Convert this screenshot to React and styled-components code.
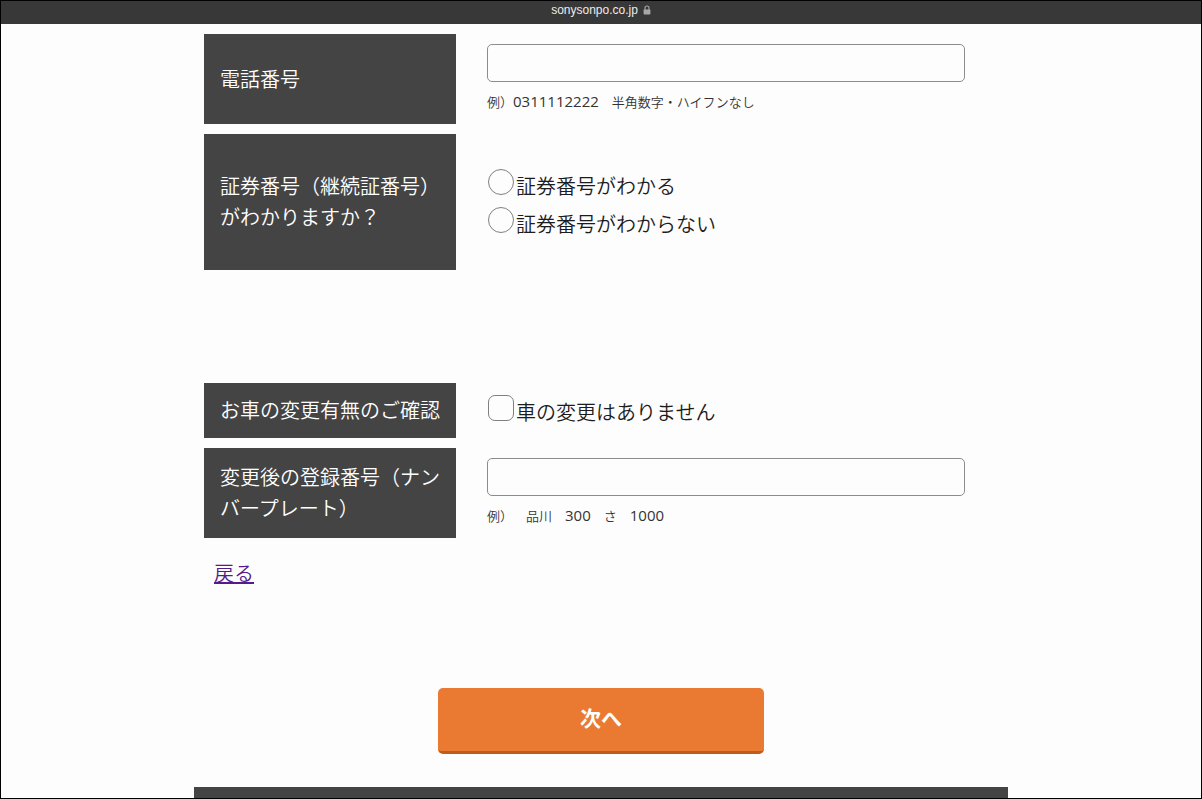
import React from 'react';
import styled, { createGlobalStyle } from 'styled-components';

const App = () => {
    return (
        <Page>
            <GlobalStyle />
            <AddressBar>
                <span>sonysonpo.co.jp</span>
                <LockIcon />
            </AddressBar>
            <Content>
                <Form onSubmit={(e) => e.preventDefault()}>
                    <Row>
                        <Heading as="label" htmlFor="tel">電話番号</Heading>
                        <Field>
                            <TextInput id="tel" type="tel" />
                            <Hint>例）<Digits>0311112222</Digits>　半角数字・ハイフンなし</Hint>
                        </Field>
                    </Row>
                    <Row>
                        <Heading id="policy">証券番号（継続証番号）がわかりますか？</Heading>
                        <Field $padding="30px 33px 30px 31px" role="radiogroup" aria-labelledby="policy">
                            <Choice>
                                <Radio name="policy" value="yes" />
                                <span>証券番号がわかる</span>
                            </Choice>
                            <Choice>
                                <Radio name="policy" value="no" />
                                <span>証券番号がわからない</span>
                            </Choice>
                        </Field>
                    </Row>
                    <Row $spaced>
                        <Heading id="car">お車の変更有無のご確認</Heading>
                        <Field $padding="6px 33px 10px 31px" role="group" aria-labelledby="car">
                            <Choice>
                                <CheckBox />
                                <span>車の変更はありません</span>
                            </Choice>
                        </Field>
                    </Row>
                    <Row>
                        <Heading as="label" htmlFor="plate">変更後の登録番号（ナンバープレート）</Heading>
                        <Field>
                            <TextInput id="plate" type="text" />
                            <Hint>例）　品川　<Digits>300</Digits>　さ　<Digits>1000</Digits></Hint>
                        </Field>
                    </Row>
                    <BackLink href="#back">戻る</BackLink>
                    <NextButton type="submit">次へ</NextButton>
                </Form>
                <Footer />
            </Content>
        </Page>
    )
}

const LockIcon = () => (
    <svg width="8" height="10" viewBox="0 0 8 10" aria-hidden="true">
        <path d="M2 5V3a2 2 0 0 1 4 0v2" fill="none" stroke="#a8a8a8" strokeWidth="1.1" />
        <rect x="0.6" y="4.4" width="6.8" height="5.2" rx="0.8" fill="#a8a8a8" />
    </svg>
)

export default App;

const GlobalStyle = createGlobalStyle`
  * {
    box-sizing: border-box;
  }
  body {
    margin: 0;
    background-color: #fdfdfd;
    color: #1c1c1c;
    font-family: 'Noto Sans CJK JP', sans-serif;
    font-size: 20px;
    font-weight: 350;
    line-height: 31px;
  }
`;

const Page = styled.div`
  display: flex;
  flex-direction: column;
  min-height: 100vh;
  border: 1px solid #000;
`;

const AddressBar = styled.header`
  display: flex;
  justify-content: center;
  align-items: center;
  gap: 5px;
  height: 23px;
  padding-bottom: 5px;
  background-color: #383838;
  color: #ececec;
  font-family: 'Liberation Sans', Arial, sans-serif;
  font-size: 12px;
  font-weight: 400;
  line-height: 18px;
`;

const Content = styled.main`
  display: flex;
  flex-direction: column;
  flex: 1;
  width: 100%;
  max-width: 814px;
  margin: 0 auto;
`;

const Form = styled.form`
  display: flex;
  flex-direction: column;
  gap: 10px;
  padding: 10px 10px 33px;
`;

const Row = styled.div`
  display: flex;
  margin-top: ${(props) => (props.$spaced ? '103px' : '0')};
`;

const Heading = styled.div`
  display: flex;
  align-items: center;
  flex: 0 1 252px;
  padding: 11px 8px 13px 16px;
  background-color: #444;
  color: #fff;
`;

const Field = styled.div`
  display: flex;
  flex-direction: column;
  justify-content: center;
  flex: 1;
  min-width: 0;
  padding: ${(props) => props.$padding || '10px 33px 12px 31px'};
`;

const TextInput = styled.input`
  width: 100%;
  height: 38px;
  padding: 0 10px;
  border: 1px solid #8c8c8c;
  border-radius: 5px;
  background-color: transparent;
  font: inherit;
`;

const Hint = styled.p`
  margin: 10px 0 0;
  color: #333;
  font-size: 13px;
  line-height: 20px;
  text-spacing-trim: space-all;
`;

const Digits = styled.span`
  font-family: 'Open Sans', sans-serif;
  font-size: 15px;
  font-weight: 400;
  line-height: 18px;
`;

const Choice = styled.label`
  display: flex;
  align-items: flex-end;
  gap: 2px;
  height: 38px;
  padding: 0 0 1px 1px;
`;

const Radio = styled.input.attrs({ type: 'radio' })`
  appearance: none;
  align-self: flex-start;
  flex: none;
  width: 26px;
  height: 26px;
  margin: 5px 0 0;
  border: 1px solid #808080;
  border-radius: 50%;
  background-color: transparent;

  &:checked {
    border: 8px solid #2f7cf6;
  }
`;

const CheckBox = styled(Radio).attrs({ type: 'checkbox' })`
  border-radius: 7px;
`;

const BackLink = styled.a`
  align-self: flex-start;
  margin: 9px 0 0 10px;
  color: #551a8b;
  text-decoration: underline;
`;

const NextButton = styled.button`
  align-self: center;
  width: 41%;
  height: 66px;
  margin-top: 90px;
  padding: 0 0 5px;
  border: 0;
  border-bottom: 3px solid #bf5b1b;
  border-radius: 5px;
  background-color: #ea7a32;
  color: #fff;
  font: inherit;
  font-size: 21px;
  font-weight: 700;
  cursor: pointer;
`;

const Footer = styled.footer`
  flex: 1;
  min-height: 10px;
  background-color: #444;
`;
